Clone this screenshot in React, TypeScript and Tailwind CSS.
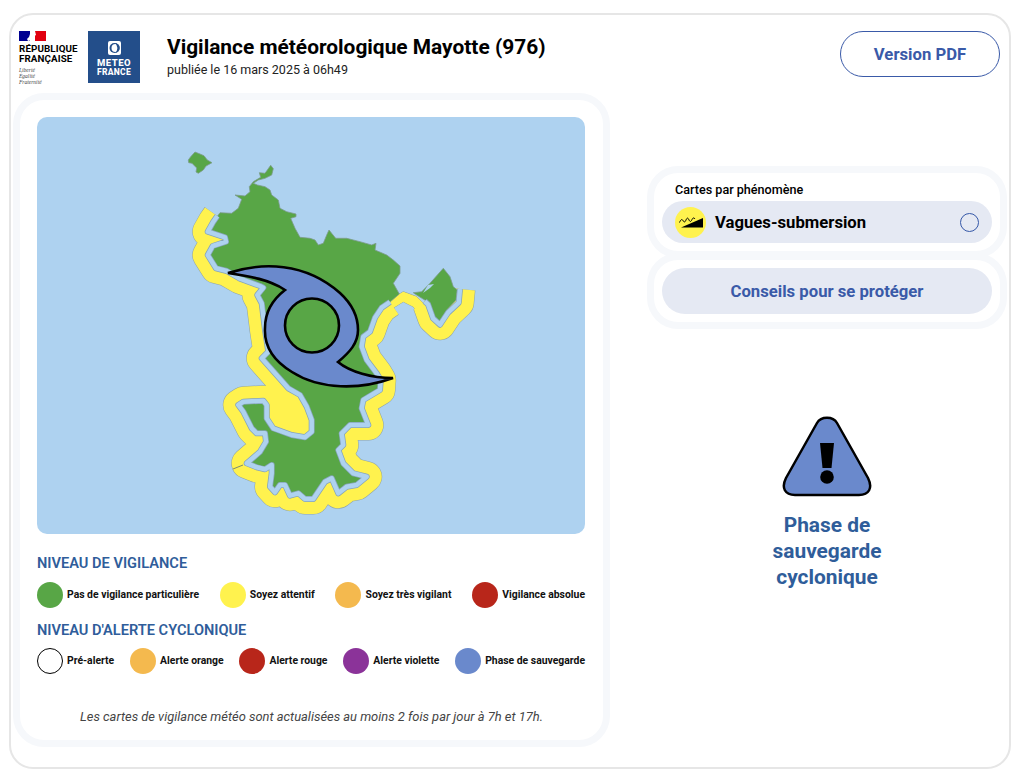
type Pt = [number, number];

// traced from zoomed crops of the map, converted to page coords below
const fromA = (pts: Pt[]): Pt[] => pts.map(([x, y]) => [170 + x / 3, 140 + y / 3]);
const fromB = (pts: Pt[]): Pt[] => pts.map(([x, y]) => [210 + x / 3, 330 + y / 3]);
const toLine = (pts: Pt[]) => "M" + pts.map(([x, y]) => `${x.toFixed(1)},${y.toFixed(1)}`).join("L");
const toPath = (pts: Pt[]) => toLine(pts) + "Z";

const ISLET = toPath(fromA([[55, 60], [62, 50], [75, 36], [90, 42], [102, 47], [112, 60], [126, 68], [108, 78], [100, 90], [85, 100], [78, 96], [80, 84], [66, 70], [56, 68]]));

const NORTH_EAST = fromA([
  [302, 76], [310, 86], [305, 105], [285, 115], [265, 120], [250, 130], [262, 135], [285, 140], [300, 150], [305, 165],
  [325, 180], [330, 205], [350, 215], [378, 222], [378, 230], [362, 235], [375, 265], [390, 292], [420, 295], [435, 300],
  [445, 315], [460, 310], [470, 285], [477, 270], [497, 295], [530, 295], [570, 305], [605, 315], [618, 310], [615, 330],
  [650, 345], [670, 360], [690, 378], [690, 400], [670, 430], [688, 462],
]);
// these lines run down the middle of the lagoon stripe, not along the green edge
const EAST_TOP = fromA([[660, 486], [635, 503], [615, 533], [600, 575]]);
const SOUTH = fromB([
  [460, 20], [455, 50], [470, 90], [500, 130], [512, 150], [510, 180], [460, 210], [455, 235], [475, 285], [420, 285],
  [395, 310], [400, 345], [385, 360], [400, 400], [430, 430], [470, 440], [440, 465], [410, 470], [385, 490], [365, 445],
  [345, 455], [310, 507], [285, 507], [265, 490], [240, 497], [225, 465], [210, 465], [195, 487], [180, 470], [185, 430],
  [185, 405], [165, 418], [140, 412], [110, 400], [150, 365], [168, 335], [165, 310], [140, 310], [125, 295], [100, 245],
  [85, 225], [100, 215], [160, 212], [170, 225], [170, 265], [190, 295], [245, 315], [285, 322], [305, 305], [305, 270],
  [290, 230], [270, 195], [235, 175], [195, 130], [155, 85], [175, 65],
]);
const WEST = fromA([
  [285, 570], [275, 490], [262, 465], [280, 443], [270, 438], [210, 416], [170, 393], [138, 385], [113, 345], [128, 318],
  [168, 305], [165, 292], [113, 275], [130, 245],
]);
const NORTH_WEST = fromA([
  [150, 218], [185, 220], [205, 205], [215, 178], [195, 165], [225, 168], [240, 155], [238, 140], [250, 125], [272, 112],
  [268, 98], [285, 100],
]);

const MAIN = toPath([...NORTH_EAST, ...EAST_TOP, ...SOUTH, ...WEST, ...NORTH_WEST]);
const COAST = toLine([...EAST_TOP, ...SOUTH, ...WEST, ...fromA([[142, 228]])]);

const PETITE_TERRE = toPath(fromA([[820, 385], [840, 410], [850, 440], [862, 450], [858, 480], [830, 510], [810, 548], [795, 533], [780, 490], [740, 465], [730, 458], [755, 455], [780, 430]]));
const PETITE_COAST = toLine(fromA([[764, 484], [774, 493], [789, 535], [810, 554], [834, 518], [866, 488], [870, 447]]));

// the band between the main island and Petite-Terre, and the bay
const BRIDGE = toPath(fromA([[615, 520], [650, 485], [700, 455], [740, 470], [780, 510], [770, 560], [730, 500], [700, 485], [660, 510], [640, 570], [600, 570]]));
const BAY = toPath(fromB([[180, 220], [240, 175], [300, 290], [200, 285]]));

const CYCLONE =
  "M228,273C262,262 305,262 340,293C352,304 358,316 358,330C358,343 350,352 338,362C350,372 372,378 393,378C360,390 320,390 292,372C272,360 264,345 265,328C265,312 272,300 285,290C270,280 250,276 228,273Z";

function MayotteMap() {
  return (
    <svg viewBox="37 117 548 417" className="block h-[417px] w-[548px] rounded-[10px] bg-[#aed2f0]">
      {/* yellow band: a buffer along the coast, grey rim first */}
      <g fill="none" stroke="#8fa3a8" strokeWidth="31" strokeLinejoin="round">
        <path d={COAST} />
        <path d={PETITE_COAST} />
      </g>
      <path d={BRIDGE} fill="#fff24e" stroke="#8fa3a8" strokeWidth="1" strokeLinejoin="round" />
      <g fill="none" stroke="#fff24e" strokeWidth="30" strokeLinejoin="round">
        <path d={COAST} />
        <path d={PETITE_COAST} />
      </g>
      <path d={BRIDGE} fill="#fff24e" />
      <path d={BAY} fill="#fff24e" />
      <g fill="#58a646" stroke="#7d9c8c" strokeWidth="0.8" strokeLinejoin="round">
        <path d={ISLET} />
        <path d={MAIN} />
        <path d={PETITE_TERRE} />
      </g>
      {/* lagoon stripe on top of the coast */}
      <g fill="none" stroke="#86a5b8" strokeWidth="6" strokeLinejoin="round">
        <path d={COAST} />
        <path d={PETITE_COAST} />
      </g>
      <g fill="none" stroke="#aed2f0" strokeWidth="4.5" strokeLinejoin="round">
        <path d={COAST} />
        <path d={PETITE_COAST} />
      </g>
      <path d="M423,293L430,288L434,284L428,285Z" fill="#aed2f0" />
      <path d="M233,469L243,465" stroke="#7d8c70" strokeWidth="1" />
      <path d={CYCLONE} fill="#6a89cc" stroke="#000" strokeWidth="2.6" strokeLinejoin="miter" />
      <circle cx="312" cy="325.5" r="27" fill="#58a646" stroke="#000" strokeWidth="2.6" />
    </svg>
  );
}

function Logos() {
  return (
    <div className="flex h-[53px] items-start gap-[10px]">
      <div className="flex w-[59px] flex-col">
        <svg width="27" height="10" viewBox="0 0 27 10" className="block">
          <rect width="27" height="10" fill="#fff" />
          <rect x="0" width="11" height="10" fill="#000091" />
          <rect x="16" width="11" height="10" fill="#e1000f" />
          <path d="M8,8 L10,6 L11,3 L15,2 L16,0 L17,4 L14,6 L13,9 L9,10Z" fill="#fff" />
        </svg>
        <div className="mt-[3px] text-[9.8px] leading-[10px] font-bold tracking-[0.1px] text-black">
          RÉPUBLIQUE
          <br />
          FRANÇAISE
        </div>
        <div className="mt-[3px] font-['Liberation_Serif',serif] text-[5.5px] leading-[6px] text-[#444] italic">
          Liberté
          <br />
          Égalité
          <br />
          Fraternité
        </div>
      </div>
      <div className="flex h-[52px] w-[52px] flex-col items-center bg-[#234e8a] pt-[10px]">
        <svg width="13" height="14" viewBox="0 0 13 14" className="block">
          <rect width="13" height="14" rx="2" fill="#fff" />
          <circle cx="6.500" cy="7" r="5" fill="#234e8a" />
          <circle cx="7.500" cy="7" r="4" fill="#fff" />
          <path d="M7,2.200 A4.800,4.800 0 0 1 7,11.800 A6,6 0 0 0 7,2.200Z" fill="#234e8a" />
        </svg>
        <div className="mt-[3px] text-center text-[9.5px] leading-[9px] font-extrabold tracking-[0.5px] text-white">
          METEO
          <br />
          <span className="text-[8.5px] tracking-[0.3px]">FRANCE</span>
        </div>
      </div>
    </div>
  );
}

function Dot({ color, label }: { color: string; label: string }) {
  return (
    <div className="flex items-center gap-1">
      <span className={`block h-[26px] w-[26px] rounded-full ${color}`} />
      <span className="text-[10.4px] leading-none font-bold text-[#111]">{label}</span>
    </div>
  );
}

function WaveIcon() {
  return (
    <svg width="31" height="31" viewBox="0 0 31 31" className="block">
      <circle cx="15.5" cy="15.5" r="15.5" fill="#fff24e" />
      <path d="M6,20.500L28,11V20.500Z" fill="#000" />
      <path d="M4.500,15.500C6,12 7,12 8,13.500C9,15.500 10,15.500 11,13C12,10.500 13,10.500 14,13C15,15 16,15 17,12.500C18,10.500 19,10.500 20,12" fill="none" stroke="#000" strokeWidth="1" />
    </svg>
  );
}

export default function App() {
  return (
    <div className="h-[782px] w-[1024px] bg-white pt-[13px] pl-[9px] font-['Roboto',sans-serif]">
      <div className="h-[756px] w-[1002px] rounded-[24px] border-2 border-[#e6e6e6] pt-[16px] pr-[9px] pl-[8px]">
        <header className="flex items-start">
          <Logos />
          <div className="ml-[27px] pt-[3px]">
            <h1 className="text-[20.9px] leading-[26px] font-bold text-black">Vigilance météorologique Mayotte (976)</h1>
            <p className="mt-[1px] text-[12.5px] leading-[18px] text-[#222]">publiée le 16 mars 2025 à 06h49</p>
          </div>
          <button className="ml-auto h-[46px] w-[160px] rounded-full border-[1.5px] border-[#3a5aa8] pt-[1px] text-[16.7px] font-bold text-[#3a5aa8]">
            Version PDF
          </button>
        </header>

        <div className="mt-[16px] flex items-start justify-between">
          <section className="ml-[1px] h-[640px] w-[583px] rounded-[24px] bg-white p-[17px] shadow-[0_0_0_7px_#f6f8fb]">
            <MayotteMap />
            <h2 className="mt-[21px] text-[14.6px] leading-[16px] font-semibold text-[#2f5d9a]">NIVEAU DE VIGILANCE</h2>
            <div className="mt-[11px] flex justify-between pr-[1px]">
              <Dot color="bg-[#58a646]" label="Pas de vigilance particulière" />
              <Dot color="bg-[#fff24e]" label="Soyez attentif" />
              <Dot color="bg-[#f4b94e]" label="Soyez très vigilant" />
              <Dot color="bg-[#b8261a]" label="Vigilance absolue" />
            </div>
            <h2 className="mt-[14px] text-[14.6px] leading-[16px] font-semibold text-[#2f5d9a]">NIVEAU D'ALERTE CYCLONIQUE</h2>
            <div className="mt-[10px] flex justify-between pr-[1px]">
              <Dot color="border-[1.5px] border-black bg-white" label="Pré-alerte" />
              <Dot color="bg-[#f4b94e]" label="Alerte orange" />
              <Dot color="bg-[#b8261a]" label="Alerte rouge" />
              <Dot color="bg-[#8b3399]" label="Alerte violette" />
              <Dot color="bg-[#6a89cc]" label="Phase de sauvegarde" />
            </div>
            <p className="mt-[34px] text-center text-[12.9px] leading-[18px] text-[#444] italic">
              Les cartes de vigilance météo sont actualisées au moins 2 fois par jour à 7h et 17h.
            </p>
          </section>

          <aside className="mt-[73px] flex w-[346px] flex-col">
            <div className="h-[78px] rounded-[24px] bg-white px-[8px] pt-[10px] shadow-[0_0_0_7px_#f6f8fb]">
              <div className="pl-[13px] text-[12.6px] leading-[14px] font-medium text-black">Cartes par phénomène</div>
              <div className="mt-[4px] flex h-[42px] items-center rounded-full bg-[#e5e9f3] pr-[13px] pl-[13px]">
                <WaveIcon />
                <span className="ml-[9px] pt-[1px] text-[16.7px] font-bold text-black">Vagues-submersion</span>
                <span className="ml-auto block h-[19px] w-[19px] rounded-full border-[1.5px] border-[#3558a8]" />
              </div>
            </div>
            <div className="mt-[9px] h-[62px] rounded-[24px] bg-white p-[8px] shadow-[0_0_0_7px_#f6f8fb]">
              <div className="flex h-[46px] items-center justify-center rounded-full bg-[#e5e9f3] pt-[1px] text-[16.7px] font-bold text-[#3a5aa8]">
                Conseils pour se protéger
              </div>
            </div>
            <div className="mt-[94px] flex flex-col items-center">
              <svg width="92" height="82" viewBox="0 0 92 82" className="block">
                <path d="M36,7C40,0 52,0 56,7L87,62C92,72 88,79 78,79H14C4,79 0,72 5,62Z" fill="#6a89cc" stroke="#000" strokeWidth="2.5" strokeLinejoin="round" />
                <path d="M39,27H53L50.500,52H41.500Z" fill="#000" />
                <circle cx="46" cy="61" r="6.8" fill="#000" />
              </svg>
              <div className="mt-[14px] w-[140px] text-center text-[20.9px] leading-[26px] font-bold text-[#2f5d9a]">
                Phase de sauvegarde cyclonique
              </div>
            </div>
          </aside>
        </div>
      </div>
    </div>
  );
}
